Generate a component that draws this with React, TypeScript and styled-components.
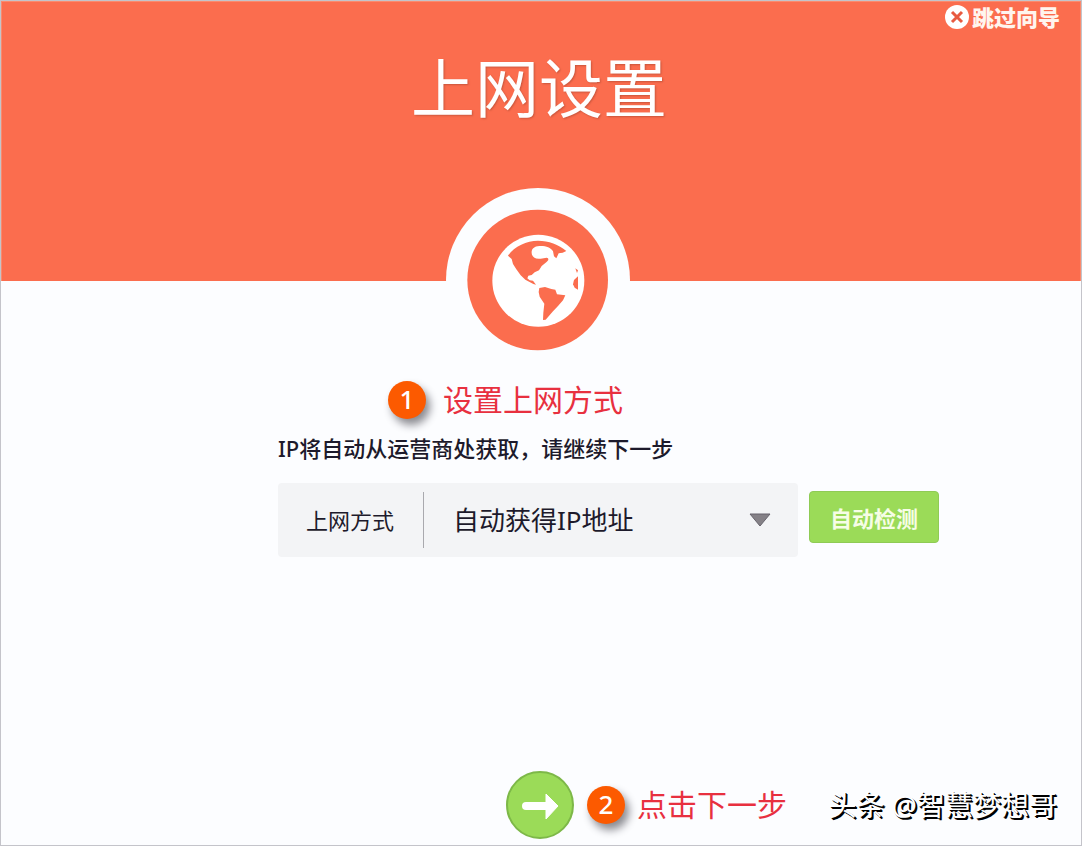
import React from 'react';
import styled, { createGlobalStyle } from 'styled-components';

const GlobalStyle = createGlobalStyle`
  * { box-sizing: border-box; }
  body { margin: 0; }
  body, button, select {
    font-family: "Noto Sans", "Noto Sans CJK SC", sans-serif;
  }
`;

const Page = styled.div`
  display: flex;
  flex-direction: column;
  min-height: 100vh;
  border: 1px solid #c4c4ca;
  background: #fcfdff;
  color: #1d1a2b;
`;

const Header = styled.header`
  display: flex;
  flex-direction: column;
  height: 280px;
  border: 1px solid #fb8a6d;
  border-bottom: 0;
  background: #fb6d4e;
  color: #fff;
`;

const SkipButton = styled.button`
  display: flex;
  align-items: center;
  align-self: flex-end;
  gap: 3px;
  margin-right: 20px;
  padding: 0;
  border: 0;
  background: none;
  color: #fff5ee;
  font-size: 22px;
  line-height: 30px;
  font-weight: 900;
  cursor: pointer;
`;

const Title = styled.h1`
  margin: 10px 4px 0 0;
  font-size: 64px;
  line-height: 92px;
  font-weight: 400;
  text-align: center;
  text-shadow: 1px 1px 2px #c9563c;
`;

const Emblem = styled.svg`
  display: block;
  width: 184px;
  height: 184px;
  margin: -93px auto 0;
`;

const Main = styled.main`
  display: flex;
  flex-direction: column;
  flex: 1;
  padding-right: 6px;
`;

const Form = styled.form`
  display: grid;
  grid-template-columns: 1fr 520px 1fr;
  column-gap: 11px;
  align-items: center;
`;

const Intro = styled.div`
  grid-column: 2;
`;

const StepNote = styled.div`
  display: flex;
  align-items: center;
  gap: 17px;
  color: #e8303f;
  font-size: 30px;
  line-height: 40px;
  white-space: nowrap;
`;

const IntroStep = styled(StepNote)`
  margin: 8px 0 0 110px;
`;

const StepNumber = styled.span`
  flex: none;
  width: 38px;
  height: 38px;
  border-radius: 50%;
  background: #fc5a00;
  box-shadow: 4px 6px 8px #8a8a90;
  color: #fff;
  font-size: 26px;
  font-weight: 500;
  line-height: 37px;
  text-align: center;
`;

const Hint = styled.p`
  margin: 12px 0 19px;
  font-size: 22px;
  font-weight: 500;
  line-height: 32px;
  white-space: nowrap;
`;

const Field = styled.div`
  grid-column: 2;
  display: flex;
  align-items: center;
  height: 74px;
  border-radius: 4px;
  background: #f3f4f6;
`;

const FieldLabel = styled.label`
  width: 146px;
  padding-left: 28px;
  border-right: 1px solid #a9a9ae;
  font-size: 22px;
  line-height: 56px;
`;

const SelectWrap = styled.div`
  display: flex;
  flex: 1;
  align-items: center;
  padding-right: 27px;
`;

const Select = styled.select`
  flex: 1;
  height: 56px;
  margin-right: -22px;
  padding: 0 22px 0 29px;
  border: 0;
  appearance: none;
  background: none;
  color: inherit;
  font-size: 26px;
`;

const Caret = styled.svg`
  width: 22px;
  height: 14px;
  pointer-events: none;
`;

const DetectButton = styled.button`
  justify-self: start;
  width: 130px;
  height: 52px;
  margin-bottom: 6px;
  padding: 0;
  border: 1px solid #8fcb55;
  border-radius: 4px;
  background: #9bdb58;
  color: #f6fde6;
  font-size: 22px;
  font-weight: 700;
  cursor: pointer;
`;

const Footer = styled.footer`
  display: grid;
  grid-template-columns: 1fr auto 1fr;
  align-items: center;
  margin-top: auto;
  padding: 0 18px 6px 22px;
`;

const NextButton = styled.button`
  grid-column: 2;
  width: 68px;
  height: 68px;
  padding: 0;
  border: 2px solid #7db848;
  border-radius: 50%;
  background: #9bdb58;
  cursor: pointer;
`;

const FooterNotes = styled.div`
  display: flex;
  align-items: center;
  justify-content: space-between;
  padding-left: 13px;
`;

const FooterStep = styled(StepNote)`
  gap: 12px;
`;

const Signature = styled.span`
  color: #fff;
  font-size: 28px;
  line-height: 40px;
  white-space: nowrap;
  text-shadow: 1px 1px 0 #000, 2px 2px 0 #000;
`;

function GlobeEmblem() {
  return (
    <Emblem viewBox="46 24 552 552" aria-hidden="true">
      <circle cx="322" cy="300" r="276" fill="#fcfdff" />
      <circle cx="321" cy="300" r="211" fill="#fb6d4e" />
      <circle cx="323" cy="302" r="138" fill="#fff" />
      <g fill="#fb6d4e">
        <path d="M232 227C252 197 288 183 322 182C354 182 384 193 407 213L396 218L384 220L377 235L370 229L367 214C360 201 344 197 326 198C310 199 302 207 303 219C304 232 314 238 330 236L348 233C357 235 353 243 344 249L333 258L325 271L312 277L303 285L293 287L290 295L297 301L307 302L316 314L308 312L284 299L270 286L257 268L247 252L243 237Z" />
        <path d="M326 324L343 321L362 327L374 329L379 343L404 346L397 361L382 378L367 394L345 419L337 420L338 398L341 371L327 350L324 336Z" />
        <path d="M442 289V329L432 323L427 313L430 300Z" />
        <path d="M434 265L442 271L439 279Z" />
      </g>
    </Emblem>
  );
}

export default function App() {
  return (
    <>
      <GlobalStyle />
      <Page>
        <Header>
          <SkipButton type="button">
            <svg width="24" height="24" viewBox="0 0 24 24" aria-hidden="true">
              <circle cx="12" cy="12" r="12" fill="#fff" />
              <path d="M7 7L17 17M17 7L7 17" stroke="#e85a40" strokeWidth="3" />
            </svg>
            跳过向导
          </SkipButton>
          <Title>上网设置</Title>
        </Header>
        <Main>
          <GlobeEmblem />
          <Form onSubmit={(e) => e.preventDefault()}>
            <Intro>
              <IntroStep>
                <StepNumber>1</StepNumber>
                设置上网方式
              </IntroStep>
              <Hint>IP将自动从运营商处获取，请继续下一步</Hint>
            </Intro>
            <Field>
              <FieldLabel htmlFor="wan-mode">上网方式</FieldLabel>
              <SelectWrap>
                <Select id="wan-mode" defaultValue="dhcp">
                  <option value="dhcp">自动获得IP地址</option>
                </Select>
                <Caret viewBox="0 0 22 14" aria-hidden="true">
                  <path d="M1 1H21L11 13Z" fill="#858187" stroke="#66636c" />
                </Caret>
              </SelectWrap>
            </Field>
            <DetectButton type="button">自动检测</DetectButton>
          </Form>
          <Footer>
            <NextButton type="button" aria-label="下一步">
              <svg width="64" height="64" viewBox="0 0 64 64" aria-hidden="true">
                <path d="M18 33H42" stroke="#fff" strokeWidth="8" strokeLinecap="round" />
                <path d="M38 21L50 33L38 46Z" fill="#fff" stroke="#fff" strokeLinejoin="round" />
              </svg>
            </NextButton>
            <FooterNotes>
              <FooterStep>
                <StepNumber>2</StepNumber>
                点击下一步
              </FooterStep>
              <Signature>头条 @智慧梦想哥</Signature>
            </FooterNotes>
          </Footer>
        </Main>
      </Page>
    </>
  );
}
